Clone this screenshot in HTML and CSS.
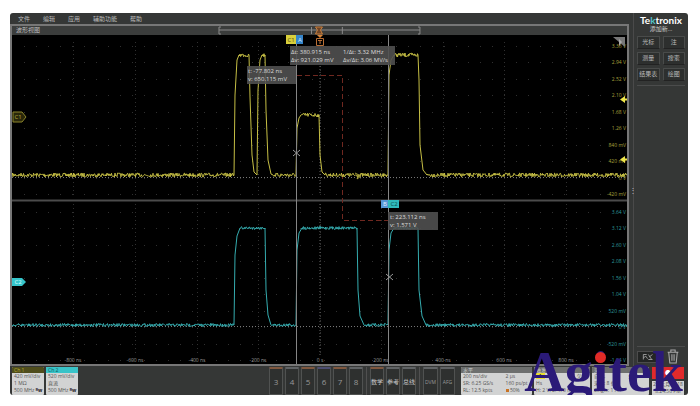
FILE: index.html
```html
<!DOCTYPE html>
<html lang="zh-CN">
<head>
<meta charset="utf-8">
<title>Tektronix</title>
<link rel="stylesheet" href="styles.css">
</head>
<body>
<main class="scope">
  <div class="upper">
    <div class="left">
      <nav class="menubar">
        <button>文件</button><button>编辑</button><button>应用</button><button>辅助功能</button><button>帮助</button>
      </nav>
      <section class="view">
        <header class="titlebar">
          <span class="title">波形视图</span>
          <svg class="overview" viewBox="0 0 204 9" preserveAspectRatio="none">
            <path d="M3 1H1V8H3M201 1H203V8H201M1 4H203M94 1V8M125 1V8" fill="none" stroke="#8b8b8b"/>
            <path d="M98 1H105L103 4L105 8H98L100 4Z" fill="#6e4527" stroke="#c97f3d"/>
          </svg>
        </header>
        <svg class="plot" viewBox="12 35 615 329">
          <rect x="12" y="35" width="615" height="329" fill="#000"/>
          <g id="grid"></g>
          <path class="zero" d="M12 177.500H627M12 326.500H627"/>
          <path class="center" d="M320 48V195M320 204V356"/>
          <path d="M12 200.500H627" stroke="#4b4b4b" stroke-width="2"/>
          <path class="link" d="M297 75.500H342.500V220.500H388"/>
          <g id="traces"></g>
          <g id="labels"></g>
          <path class="cursor" d="M296.500 43V364M388.500 35V364"/>
          <path class="cross" d="M293 150L300 156M293 156L300 150M386 274L393 280M386 280L393 274"/>
          <path d="M355 173L361 176L357 179L359 175" fill="none" stroke="#a8a138"/>

          <rect class="tip" x="290" y="46" width="105" height="19"/>
          <rect class="tip" x="247" y="66" width="49" height="18"/>
          <rect class="tip" x="388" y="212" width="50" height="18"/>
          <g class="read">
            <text x="291" y="54">Δt: 380.915 ns</text><text x="343" y="54">1/Δt: 3.32 MHz</text>
            <text x="291" y="62">Δv: 921.029 mV</text><text x="343" y="62">Δv/Δt: 3.06 MV/s</text>
            <text x="248" y="73">t: -77.802 ns</text><text x="248" y="81">v: 650.115 mV</text>
            <text x="390" y="219">t: 223.112 ns</text><text x="390" y="227">v: 1.571 V</text>
          </g>

          <g class="badge">
            <rect x="286" y="35" width="10" height="9" fill="#d8cf3c"/><text x="291" y="42" fill="#55500f">C1</text>
            <rect x="296" y="35" width="7" height="9" fill="#3585c9"/><text x="300" y="42" fill="#d5ebff">A</text>
            <rect x="381" y="200" width="7" height="8" fill="#5797d6"/><text x="385" y="206" fill="#e0efff">B</text>
            <rect x="388" y="200" width="11" height="8" fill="#2fb9bb"/><text x="394" y="206" fill="#0b4d50">C2</text>
            <path d="M13 112H22L26 117L22 122H13Z" fill="#29270a" stroke="#8b842b"/><text x="18" y="119" fill="#b3aa3a">C1</text>
            <path d="M12 278H22L26 282L22 286H12Z" fill="#36c5cb"/><text x="18" y="284" fill="#d8ffff">C2</text>
          </g>
          <path d="M317 35H323L320 38Z" fill="#d98539"/>
          <path d="M316.500 38.500H323.500V45.500H316.500ZM318 40.500H322M320 40.500V44" fill="none" stroke="#b96f35"/>
          <path d="M613 37H625V47Z" fill="#777"/><path d="M619 39L622 42L619 46Z" fill="#aaa"/>
          <path d="M620 99.500L625 96V98.500H627V100.500H625V103ZM620 159.500L625 156V158.500H627V160.500H625V163Z" fill="#eee54a"/>
        </svg>
      </section>
    </div>
    <div class="handle">⋮</div>
    <aside class="side">
      <div class="logo">Te<span>k</span>tronix</div>
      <div class="add">
        <h2>添加新...</h2>
        <div class="tools">
          <button>光标</button><button>注</button>
          <button>测量</button><button>搜索</button>
          <button>结果表</button><button>绘图</button>
        </div>
      </div>
      <div class="actions">
        <button class="zoom" aria-label="缩放"><svg viewBox="0 0 20 12"><path d="M5 9V3H9M5 7L8 5L10 8M11 3L15 9M12 6L16 3M11 9H16" fill="none" stroke="#aaa"/></svg></button>
        <button class="trash" aria-label="删除"><svg viewBox="0 0 12 14"><path d="M1 3H11M4 3V1H8V3M2 3L3 13H9L10 3M5 5V11M7 5V11" fill="none" stroke="#aaa"/></svg></button>
      </div>
    </aside>
  </div>
  <footer class="bar">
    <section class="card ch ch1"><h3>Ch 1</h3><p>420 mV/div</p><p>1 MΩ</p><p>500 MHz <b>ᴮw</b></p></section>
    <section class="card ch ch2"><h3>Ch 2</h3><p>520 mV/div</p><p>直流</p><p>500 MHz <b>ᴮw</b></p></section>
    <div class="keys">
      <button class="orange">3</button><button>4</button><button class="orange">5</button><button class="blue">6</button><button class="orange">7</button><button>8</button>
      <i></i>
      <button class="word orange">数学</button><button class="word">参考</button><button class="word">总线</button>
      <i></i>
      <button class="dim">DVM</button><button class="dim">AFG</button>
    </div>
    <section class="card horiz"><h3>水平</h3><div class="pair"><p>200 ns/div</p><p>2 µs</p><p>SR: 6.25 GS/s</p><p>160 ps/pt</p><p>RL: 12.5 kpts</p><p><em></em> 50%</p></div></section>
    <section class="card trig"><h3>触发</h3><div class="pair"><p><mark>1</mark></p><p>欠幅</p><p>Hs</p><p></p><p>H: 2 V, L: 470 mV</p></div></section>
    <section class="card acq"><h3>采集</h3><div class="pair"><p>自动,</p><p>分析</p><p>采样: 8 位</p><p></p><p>Single: 1 /1</p></div></section>
    <div class="status"><button>●</button><p>25 六月 2018<br>8:24:50 PM</p></div>
  </footer>
  <div class="mark">Ag<span>i</span>tek</div>
</main>
<script src="scope.js"></script>
</body>
</html>
```
FILE: styles.css
```css
* { box-sizing: border-box; }
body { margin: 13px 12px 11px 10px; background: #fff; font-family: "Open Sans", "Noto Sans CJK SC", sans-serif; color: #bbb; }
button { font: inherit; color: inherit; background: none; border: 0; padding: 0; margin: 0; }
h2, h3, p { margin: 0; font-weight: 400; }
.scope { position: relative; background: #353736; border-radius: 3px; }
.upper { display: flex; }
.left { flex: 1; min-width: 0; }
.menubar { height: 11px; display: flex; gap: 13px; padding-left: 8px; font-size: 6px; line-height: 12px; }
.view { border: 2px solid #777; }
.titlebar { height: 9px; display: grid; grid-template-columns: 1fr 33% 1fr; background: #3b3d3c; }
.title { padding-left: 4px; font-size: 6px; line-height: 9px; }
.overview { width: 100%; height: 9px; display: block; }
.plot { display: block; width: 100%; }
.zero { stroke: #777; stroke-dasharray: 1 2; }
.center { stroke: #666; stroke-dasharray: 1 2; }
.link { fill: none; stroke: #702820; stroke-dasharray: 5 3; }
.cursor { stroke: #858585; fill: none; }
.cross { stroke: #999; }
.tip { fill: #505050; fill-opacity: .9; }
.read { font-size: 6px; fill: #ddd; }
.badge { font-size: 6px; text-anchor: middle; }
.dot { stroke: #303030; stroke-dasharray: 1 3; fill: none; }
.dot.row { stroke-dasharray: 1 11; }
.trace { fill: none; stroke-width: 1; stroke-linejoin: round; }
.trace.y { stroke: #c6bf45; }
.trace.c { stroke: #35adb0; }
.axis { font-size: 5px; text-anchor: end; }
.axis.y { fill: #a8a13c; }
.axis.c { fill: #2e9a9e; }
.axis.x { fill: #999; text-anchor: middle; }
.handle { width: 5px; display: grid; place-items: center; font-size: 8px; line-height: 8px; border-right: 1px solid #4a4a4a; }
.side { width: 54px; padding: 2px 3px 2px 3px; display: flex; flex-direction: column; }
.logo { font: 700 10px/10px "Lato", sans-serif; color: #fff; text-align: center; }
.logo span { color: #4fc3c7; }
.add { border-bottom: 1px solid #4b4c4c; padding-bottom: 4px; }
.add h2 { font-size: 6px; line-height: 8px; text-align: center; color: #ccc; }
.tools { display: grid; grid-template-columns: 1fr 1fr; gap: 3px; padding-top: 3px; }
.tools button { height: 13px; font-size: 6px; line-height: 11px; border: 1px solid #494b4a; border-bottom-color: #222; border-radius: 1px; background: #2d2f2e; }
.actions { margin-top: auto; border-top: 1px solid #4b4c4c; padding-top: 2px; display: flex; justify-content: space-between; align-items: center; }
.zoom { width: 21px; height: 12px; background: #232524; border: 1px solid #4c4c4c; }
.zoom svg { display: block; width: 100%; height: 100%; }
.trash { width: 14px; height: 15px; margin-right: 5px; }
.trash svg { display: block; width: 100%; height: 100%; }
.bar { height: 29px; display: flex; gap: 2px; padding: 1px 2px 0 2px; }
.card { background: #d2d3d3; color: #555; font-size: 5px; line-height: 7px; overflow: hidden; white-space: nowrap; border-radius: 1px; }
.card h3 { font-size: 5px; line-height: 6px; height: 6px; padding-left: 2px; background: #6d6f6e; color: #ccc; }
.card p { padding-left: 2px; height: 7px; }
.ch { width: 32px; }
.ch b { color: #222; }
.ch1 h3 { background: #4f4d1c; color: #b8ae31; }
.ch2 h3 { background: #39c3c8; color: #0a5b5f; }
.keys { flex: 1; display: flex; justify-content: flex-end; gap: 2px; padding-right: 4px; font-size: 8px; color: #999; }
.keys button { width: 14px; border: 1px solid #505251; border-top: 2px solid #606365; background: #2e302f; border-radius: 1px; }
.keys .orange { border-top-color: #80583f; }
.keys .blue { border-top-color: #4c4e72; }
.keys .word { font-size: 6px; color: #ccc; }
.keys .dim { font-size: 5px; width: 15px; }
.keys i { width: 1px; margin: 0 1px; background: #505050; }
.pair { display: grid; grid-template-columns: 3fr 2fr; }
.horiz { width: 71px; }
.trig { width: 56px; }
.acq { width: 57px; }
.pair em { display: inline-block; width: 3px; height: 3px; background: #c87324; }
.pair mark { display: inline-block; width: 9px; height: 6px; background: #e9df31; line-height: 6px; text-align: center; }
.status { width: 34px; margin-left: 1px; display: flex; flex-direction: column; gap: 2px; font-size: 5px; line-height: 7px; }
.status button { height: 12px; width: 32px; background: #e02a2c; color: #fff; font-size: 6px; line-height: 12px; }
.status p { width: 32px; height: 14px; background: #d2d3d3; color: #555; text-align: center; overflow: hidden; white-space: nowrap; }
.mark { position: absolute; right: 5px; bottom: -5px; font: 700 56px/56px "Liberation Serif", serif; color: #2b1a78; pointer-events: none; }
.mark span { position: relative; }
.mark span::after { content: ""; position: absolute; left: 2px; top: 11px; width: 11px; height: 11px; border-radius: 50%; background: #e02b27; }
```
FILE: scope.js
```js
const NS = "http://www.w3.org/2000/svg";
function add(parent, name, attrs, text) {
  const el = document.createElementNS(NS, name);
  for (const key in attrs) el.setAttribute(key, attrs[key]);
  if (text) el.textContent = text;
  document.getElementById(parent).appendChild(el);
}

// Graticule: ten time divisions, horizontal rows of sparse dots
const columns = [73, 135, 197, 258, 320, 381, 443, 504, 566];
columns.forEach(x => add("grid", "path", { class: "dot", d: `M${x + .5} 42V198M${x + .5} 204V356` }));
const upper = [46, 62, 79, 95, 112, 128, 145, 161, 178, 194];
const lower = [212, 228, 245, 261, 278, 294, 311, 327, 344, 360];
upper.concat(lower).forEach(y => add("grid", "path", { class: "dot row", d: `M24 ${y + .5}H610` }));

const v1 = ["3.36 V", "2.94 V", "2.52 V", "2.10 V", "1.68 V", "1.26 V", "840 mV", "420 mV", "0 V", "-420 mV"];
const v2 = ["3.64 V", "3.12 V", "2.60 V", "2.08 V", "1.56 V", "1.04 V", "520 mV", "0 V", "-520 mV", "-1.04 V"];
upper.forEach((y, i) => add("labels", "text", { class: "axis y", x: 626, y: y + 2 }, v1[i]));
lower.forEach((y, i) => add("labels", "text", { class: "axis c", x: 626, y: y + 2 }, v2[i]));
columns.forEach((x, i) => add("labels", "text", { class: "axis x", x, y: 362 }, i === 4 ? "0 s" : (i - 4) * 200 + " ns"));

// Flat stretches carry noise, edges are drawn as they are
let seed = 7;
const rand = () => (seed = (seed * 16807) % 2147483647) / 2147483647 - .5;
function trace(cls, points, noise) {
  let d = `M${points[0]}`;
  for (let i = 1; i < points.length; i++) {
    const [x0, y0] = points[i - 1], [x1, y1] = points[i];
    if (y0 === y1) for (let x = x0 + .5; x < x1; x += .5) d += `L${x} ${(y0 + rand() * noise).toFixed(1)}`;
    d += `L${x1} ${y1}`;
  }
  add("traces", "path", { class: "trace " + cls, d });
}
trace("y", [[12, 175], [234, 175], [235, 95], [237, 60], [239, 55], [249, 55], [250, 97], [252, 155], [254, 172], [257, 175],
  [258, 90], [260, 60], [262, 55], [265, 55], [266, 110], [268, 160], [271, 174], [273, 175], [296, 175],
  [297, 128], [299, 118], [301, 115], [319, 115], [320, 155], [322, 172], [325, 175], [388, 175],
  [389, 75], [391, 60], [394, 55], [418, 55], [419, 80], [420, 145], [423, 170], [427, 175], [627, 175]], 4);
trace("c", [[12, 325], [234, 325], [235, 255], [237, 236], [240, 228], [265, 228], [266, 290], [268, 315], [271, 325],
  [296, 325], [297, 250], [299, 233], [302, 228], [357, 228], [358, 290], [360, 316], [364, 325], [388, 325],
  [389, 250], [391, 233], [394, 228], [418, 228], [419, 290], [422, 316], [426, 325], [627, 325]], 3);
```
